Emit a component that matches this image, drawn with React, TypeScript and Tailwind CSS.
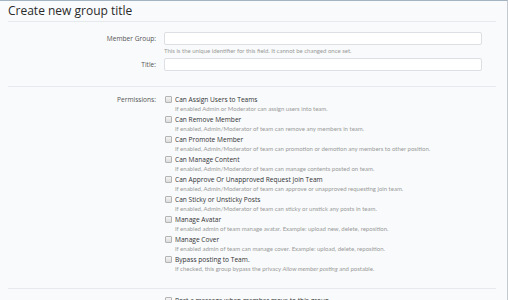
const permissions: { title: string; desc: React.ReactNode }[] = [
  { title: 'Can Assign Users to Teams', desc: 'If enabled Admin or Moderator can assign users into team.' },
  { title: 'Can Remove Member', desc: 'If enabled, Admin/Moderator of team can remove any members in team.' },
  { title: 'Can Promote Member', desc: 'If enabled, Admin/Moderator of team can promotion or demotion any members to other position.' },
  { title: 'Can Manage Content', desc: 'If enabled, Admin/Moderator of team can manage contents posted on team.' },
  { title: 'Can Approve Or Unapproved Request Join Team', desc: 'If enabled, Admin/Moderator of team can approve or unapproved requesting join team.' },
  { title: 'Can Sticky or Unsticky Posts', desc: 'If enabled, Admin/Moderator of team can sticky or unstick any posts in team.' },
  { title: 'Manage Avatar', desc: 'If enabled admin of team manage avatar. Example: upload new, delete, reposition.' },
  { title: 'Manage Cover', desc: 'If enabled admin of team can manage cover. Example: upload, delete, reposition.' },
  {
    title: 'Bypass posting to Team.',
    desc: (
      <>
        If checked, this group bypass the privacy <i>Allow member posting</i> and postable.
      </>
    ),
  },
];

function Checkbox() {
  return <span className="mt-[1px] block h-[7px] w-[7px] shrink-0 rounded-[1px] border border-[#b4b4b4] bg-gradient-to-b from-[#f4f4f4] to-[#dcdcdc]" />;
}

function CheckItem({ title, desc }: { title: string; desc?: React.ReactNode }) {
  return (
    <div className="flex gap-[3px]">
      <Checkbox />
      <div>
        <div className="font-['Open_Sans',sans-serif] text-[6.6px] leading-[9px] text-[#333]">{title}</div>
        {desc && <div className="mt-[1px] text-[6px] leading-[8px] text-[#9a9a9a]">{desc}</div>}
      </div>
    </div>
  );
}

function Label({ children }: { children: React.ReactNode }) {
  return <div className="text-right font-['Open_Sans',sans-serif] text-[6.6px] leading-[13px] text-[#555]">{children}</div>;
}

function TextBox() {
  return <div className="h-[13px] rounded-[2px] border border-[#dcdfe3] bg-white" />;
}

export default function App() {
  return (
    <div
      className="h-[300px] w-[508px] overflow-hidden border-t border-r border-t-[#a4b4c1] border-r-[#c4cacf] bg-[#f9fafc]"
      style={{ fontFamily: 'Lato, "Liberation Sans", sans-serif' }}
    >
      <div className="pl-[8px] pr-[11px]">
        <h1 className="border-b border-[#e6e9ed] pt-[3px] pb-[3px] font-['Open_Sans',sans-serif] text-[12px] leading-[14px] text-[#2a2a2a]">
          Create new group title
        </h1>

        <div className="grid grid-cols-[148px_318px] gap-x-[8px] pt-[10px] pb-[15px]">
          <Label>Member Group:</Label>
          <div>
            <TextBox />
            <div className="pt-[2px] text-[6px] leading-[8px] text-[#9a9a9a]">This is the unique identifier for this field. It cannot be changed once set.</div>
          </div>
          <div className="col-span-2 h-[3px]" />
          <Label>Title:</Label>
          <TextBox />
        </div>

        <div className="grid grid-cols-[148px_318px] gap-x-[9px] border-t border-[#e6e9ed] pt-[8px] pb-[15px]">
          <div className="text-right font-['Open_Sans',sans-serif] text-[6.6px] leading-[9px] text-[#555]">Permissions:</div>
          <div className="flex flex-col gap-[2px]">
            {permissions.map((p) => (
              <CheckItem key={p.title} title={p.title} desc={p.desc} />
            ))}
          </div>
        </div>

        <div className="grid grid-cols-[148px_318px] gap-x-[9px] border-t border-[#e6e9ed] pt-[7px]">
          <div />
          <CheckItem title="Post a message when member move to this group" />
        </div>
      </div>
    </div>
  );
}
